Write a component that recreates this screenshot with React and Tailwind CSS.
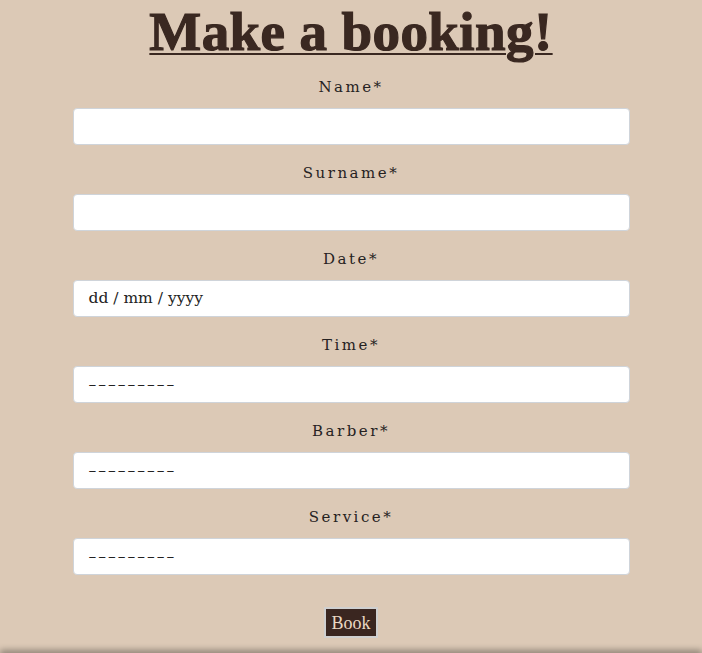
export default function App() {
  const fields = [
    { label: "Name*", type: "text" },
    { label: "Surname*", type: "text" },
    { label: "Date*", type: "date" },
    { label: "Time*", type: "select" },
    { label: "Barber*", type: "select" },
    { label: "Service*", type: "select" },
  ];

  return (
    <div className="bg-[#dcc9b6] font-['DejaVu_Serif',serif]">
      <main className="min-h-[653px] flex flex-col items-center">
        <h1 className="font-['Liberation_Serif',serif] font-bold text-[55px] leading-[64px] tracking-[0.4px] text-[#3a2821] [-webkit-text-stroke:1.2px_#3a2821] underline decoration-2 underline-offset-[3px] mb-[11px]">
          Make a booking!
        </h1>

        <form className="w-[557px] flex flex-col">
          {fields.map((f) => (
            <div key={f.label} className="flex flex-col mb-4">
              <label className="text-center text-[15px] leading-6 tracking-[2.5px] text-[#262222] mb-[9px]">
                {f.label}
              </label>
              <div className="h-[37px] bg-white border border-[#cfd4da] rounded-[4px] flex items-center px-[15px] text-[15.5px] text-[#222]">
                {f.type === "date" && <span>dd / mm / yyyy</span>}
                {f.type === "select" && <span className="tracking-[2px]">–––––––––</span>}
              </div>
            </div>
          ))}
        </form>

        <button className="mt-4 h-[31px] px-[5px] bg-[#3a2620] text-[#ead8c4] border-2 border-[#cfcfcf] text-[18px] leading-none font-['Liberation_Serif',serif]">
          Book
        </button>
      </main>
      <footer className="h-2 shadow-[0_-3px_6px_rgba(0,0,0,0.35)]" />
    </div>
  );
}
